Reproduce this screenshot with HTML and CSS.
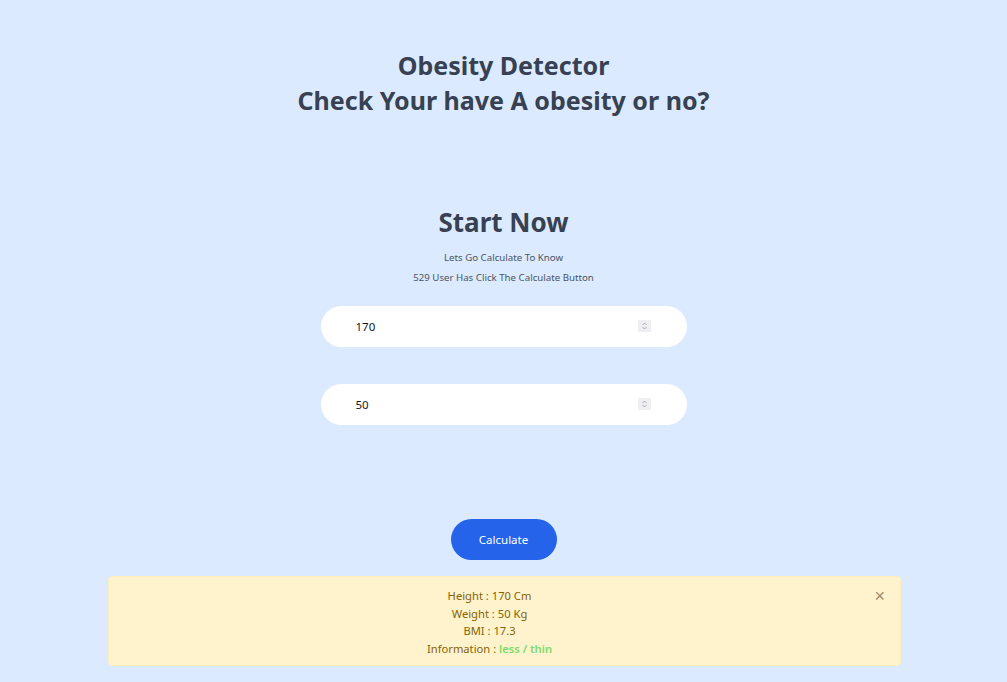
FILE: index.html
```html
<!DOCTYPE html>
<html>
<head>
    <meta name="viewport" content="width=device-width, initial-scale=1">
    <link rel="stylesheet" href="styles.css">
</head>
<body>

<header class="header">
    <h1 class="title">Obesity Detector<br>Check Your have A obesity or no?</h1>
</header>

<section class="calc">
    <h2 class="calc-title">Start Now</h2>
    <p class="calc-sub">Lets Go Calculate To Know</p>
    <p class="calc-sub">529 User Has Click The Calculate Button</p>

    <form class="calc-form">
        <div class="field">
            <input type="text" class="field-input" value="170">
            <span class="spin">
                <svg width="9" height="10" viewBox="0 0 9 10"><path d="M2.5 4 L4.5 2 L6.5 4 M2.5 6 L4.5 8 L6.5 6" fill="none" stroke="#9ca3af" stroke-width="0.9"/></svg>
            </span>
        </div>
        <div class="field">
            <input type="text" class="field-input" value="50">
            <span class="spin">
                <svg width="9" height="10" viewBox="0 0 9 10"><path d="M2.5 4 L4.5 2 L6.5 4 M2.5 6 L4.5 8 L6.5 6" fill="none" stroke="#9ca3af" stroke-width="0.9"/></svg>
            </span>
        </div>
        <button type="button" class="btn">Calculate</button>
    </form>
</section>

<div class="alert">
    <button type="button" class="alert-close">&times;</button>
    <p>Height : 170 Cm</p>
    <p>Weight : 50 Kg</p>
    <p>BMI : 17.3</p>
    <p>Information : <span class="thin">less / thin</span></p>
</div>

</body>
</html>
```

FILE: styles.css
```css
body {
    margin: 0;
    background-color: #dbeafe;
    font-family: "Noto Sans", "Open Sans", sans-serif;
    color: #374151;
}
* {box-sizing: border-box;}

/* Page header */
.header {
    padding-top: 48px;
    text-align: center;
}
.title {
    margin: 0;
    font-size: 25px;
    line-height: 35px;
    font-weight: 700;
}

/* Calculator block */
.calc {
    margin-top: 86px;
    display: flex;
    flex-direction: column;
    align-items: center;
}
.calc-title {
    margin: 0 0 8px 0;
    font-size: 26px;
    line-height: 36px;
    font-weight: 700;
}
.calc-sub {
    margin: 0;
    font-size: 9.7px;
    line-height: 20px;
    color: #4b5563;
}

.calc-form {
    margin-top: 18px;
    display: flex;
    flex-direction: column;
    align-items: center;
    gap: 37px;
}

.field {
    position: relative;
    width: 366px;
    height: 41px;
    background: white;
    border-radius: 999px;
}
.field-input {
    width: 100%;
    height: 100%;
    border: none;
    background: transparent;
    padding: 0 35px;
    font-family: inherit;
    font-size: 11.5px;
    color: #111827;
    outline: none;
}
/* number spinner look */
.spin {
    position: absolute;
    right: 36px;
    top: 14px;
    width: 13px;
    height: 12px;
    background: #efeff1;
    display: flex;
    align-items: center;
    justify-content: center;
}

.btn {
    margin-top: 57px;
    width: 106px;
    height: 41px;
    border: none;
    border-radius: 999px;
    background-color: #2563eb;
    color: white;
    font-family: inherit;
    font-size: 11.5px;
}

/* Result box */
.alert {
    position: relative;
    margin: 16px 106px 0 108px;
    padding: 10px 50px 8px 20px;
    background-color: #fff3cd;
    border: 1px solid #ffeeba;
    border-radius: 4px;
    color: #856404;
    text-align: center;
    font-size: 11.2px;
    line-height: 17.6px;
}
.alert p {
    margin: 0;
}
.alert-close {
    position: absolute;
    top: 10px;
    right: 15px;
    border: none;
    background: transparent;
    color: #a0896a;
    font-size: 18px;
    line-height: 1;
    padding: 0;
}
.thin {
    color: #7bdc6a;
    font-weight: 600;
}
```
